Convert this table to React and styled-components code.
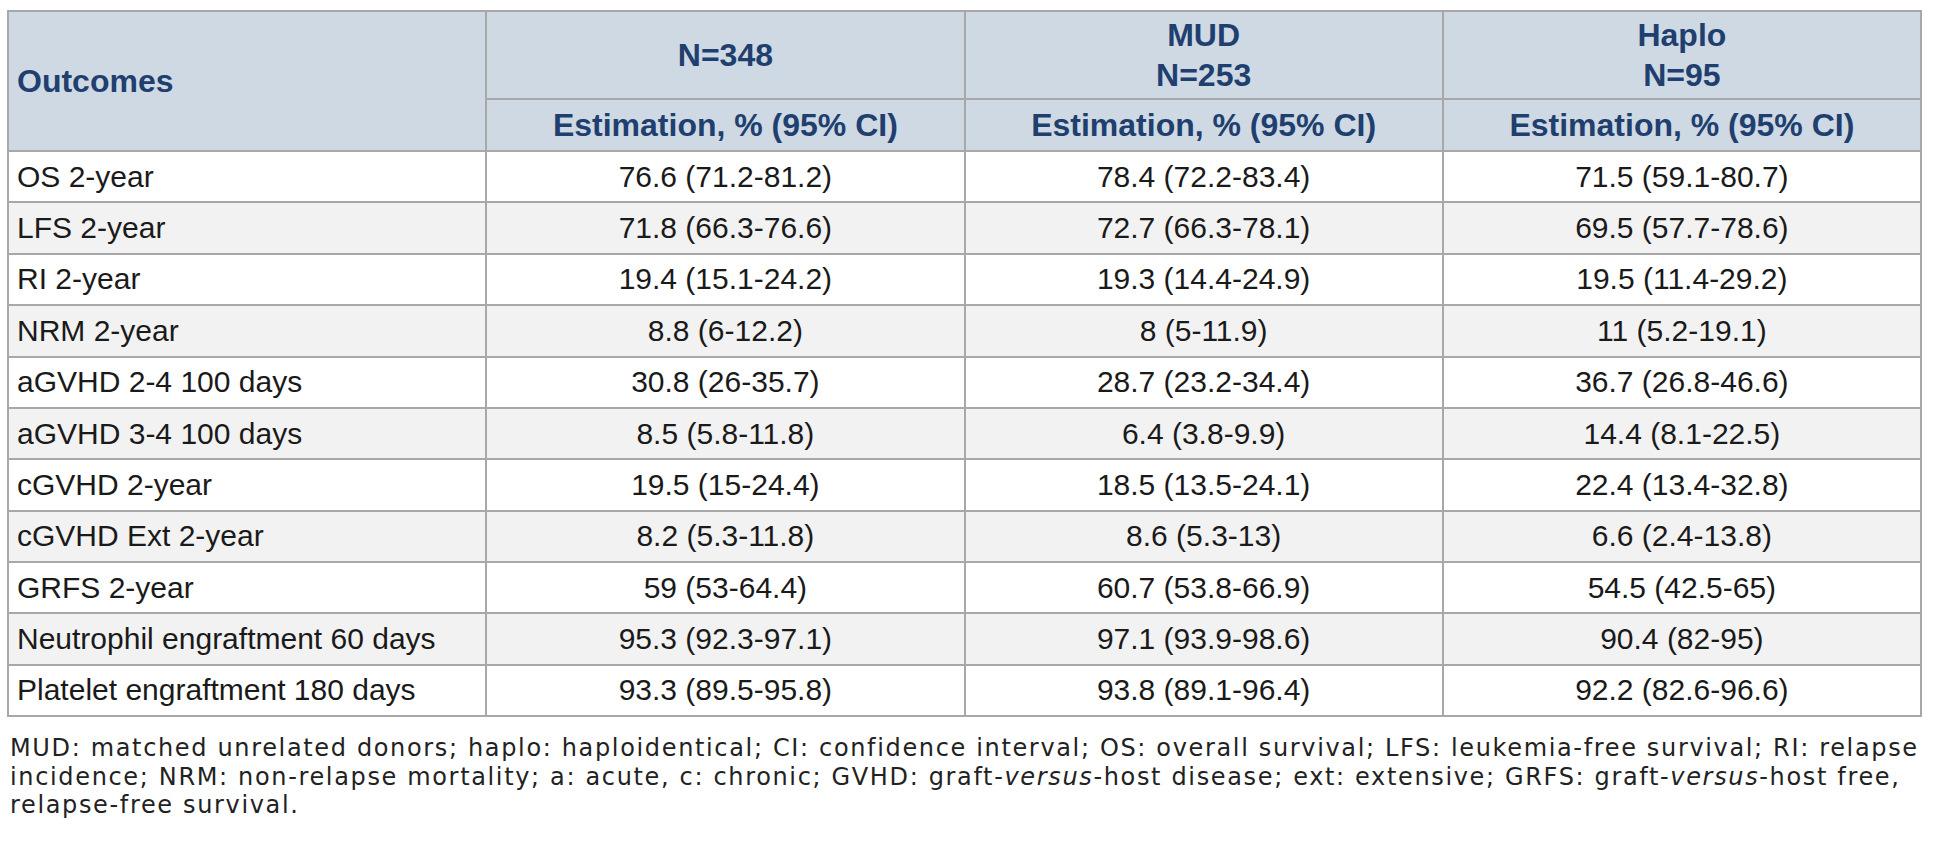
import React from 'react';
import styled, { createGlobalStyle } from 'styled-components';

const rows = [
  ['OS 2-year', '76.6 (71.2-81.2)', '78.4 (72.2-83.4)', '71.5 (59.1-80.7)'],
  ['LFS 2-year', '71.8 (66.3-76.6)', '72.7 (66.3-78.1)', '69.5 (57.7-78.6)'],
  ['RI 2-year', '19.4 (15.1-24.2)', '19.3 (14.4-24.9)', '19.5 (11.4-29.2)'],
  ['NRM 2-year', '8.8 (6-12.2)', '8 (5-11.9)', '11 (5.2-19.1)'],
  ['aGVHD 2-4 100 days', '30.8 (26-35.7)', '28.7 (23.2-34.4)', '36.7 (26.8-46.6)'],
  ['aGVHD 3-4 100 days', '8.5 (5.8-11.8)', '6.4 (3.8-9.9)', '14.4 (8.1-22.5)'],
  ['cGVHD 2-year', '19.5 (15-24.4)', '18.5 (13.5-24.1)', '22.4 (13.4-32.8)'],
  ['cGVHD Ext 2-year', '8.2 (5.3-11.8)', '8.6 (5.3-13)', '6.6 (2.4-13.8)'],
  ['GRFS 2-year', '59 (53-64.4)', '60.7 (53.8-66.9)', '54.5 (42.5-65)'],
  ['Neutrophil engraftment 60 days', '95.3 (92.3-97.1)', '97.1 (93.9-98.6)', '90.4 (82-95)'],
  ['Platelet engraftment 180 days', '93.3 (89.5-95.8)', '93.8 (89.1-96.4)', '92.2 (82.6-96.6)'],
];

const GlobalStyle = createGlobalStyle`
  body {
    margin: 0;
    background: #ffffff;
  }
`;

const Page = styled.div`
  padding: 10px 11px 0 7px;
`;

const Table = styled.table`
  width: 1915px;
  table-layout: fixed;
  border-collapse: collapse;
  border: 2px solid #a8a8a8;
  font-family: 'Liberation Sans', Arial, sans-serif;
`;

const Head = styled.th`
  background: #cfd9e3;
  color: #203f6f;
  font-weight: 700;
  font-size: 32px;
  line-height: ${(p) => (p.$tall ? '40px' : '36px')};
  padding: ${(p) => (p.$tall ? '3px 8px' : '7px 8px')};
  text-align: ${(p) => (p.$left ? 'left' : 'center')};
  vertical-align: middle;
  border: 2px solid #a8a8a8;
  white-space: nowrap;
`;

const Row = styled.tr`
  background: ${(p) => (p.$shade ? '#f2f2f2' : '#ffffff')};
`;

const Cell = styled.td`
  color: #1a1a1a;
  font-size: 30px;
  line-height: 36px;
  padding: 6.7px 8px;
  text-align: ${(p) => (p.$left ? 'left' : 'center')};
  border: 2px solid #a8a8a8;
  white-space: nowrap;
`;

const Note = styled.p`
  margin: 17px 0 0 3px;
  font-family: 'DejaVu Sans', 'Open Sans', sans-serif;
  font-size: 24px;
  line-height: 28.4px;
  color: #222222;
  letter-spacing: 1.65px;
  white-space: nowrap;
`;

export default function App() {
  return (
    <Page>
      <GlobalStyle />
      <Table>
        <thead>
          <tr>
            <Head rowSpan={2} $left>Outcomes</Head>
            <Head $tall>N=348</Head>
            <Head $tall>MUD<br />N=253</Head>
            <Head $tall>Haplo<br />N=95</Head>
          </tr>
          <tr>
            <Head>Estimation, % (95% CI)</Head>
            <Head>Estimation, % (95% CI)</Head>
            <Head>Estimation, % (95% CI)</Head>
          </tr>
        </thead>
        <tbody>
          {rows.map((r, i) => (
            <Row key={r[0]} $shade={i % 2 === 1}>
              <Cell $left>{r[0]}</Cell>
              <Cell>{r[1]}</Cell>
              <Cell>{r[2]}</Cell>
              <Cell>{r[3]}</Cell>
            </Row>
          ))}
        </tbody>
      </Table>
      <Note>
        MUD: matched unrelated donors; haplo: haploidentical; CI: confidence interval; OS: overall survival; LFS: leukemia-free survival; RI: relapse
        <br />
        incidence; NRM: non-relapse mortality; a: acute, c: chronic; GVHD: graft-<em>versus</em>-host disease; ext: extensive; GRFS: graft-<em>versus</em>-host free,
        <br />
        relapse-free survival.
      </Note>
    </Page>
  );
}
